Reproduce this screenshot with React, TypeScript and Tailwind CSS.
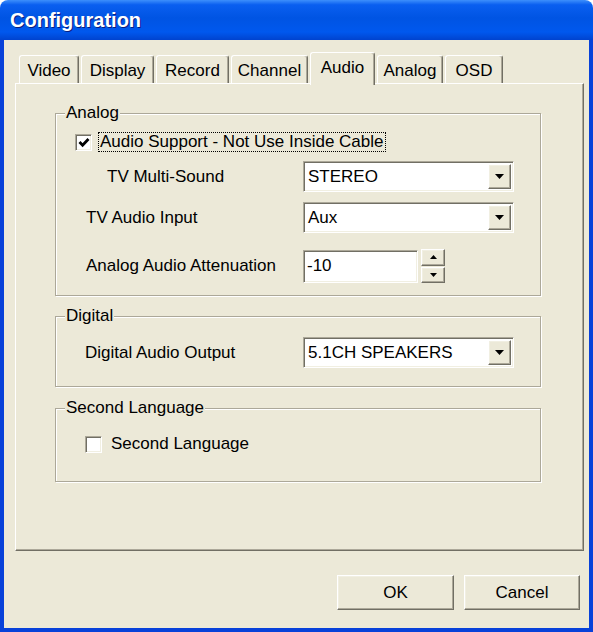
import React from 'react'

const raised =
  'bg-[#ece9d8] border border-t-white border-l-white border-r-[#716f64] border-b-[#716f64] shadow-[inset_-1px_-1px_0_#aca899,inset_1px_1px_0_#f1efe2]'
const sunken =
  'border border-t-[#aca899] border-l-[#aca899] border-r-white border-b-white shadow-[inset_1px_1px_0_#716f64,inset_-1px_-1px_0_#f1efe2]'

function Arrow({ up, small }: { up?: boolean; small?: boolean }) {
  const w = small ? 7 : 9
  const h = small ? 4 : 5
  const d = up ? `M0 ${h}H${w}L${w / 2} 0z` : `M0 0H${w}L${w / 2} ${h}z`
  return (
    <svg width={w} height={h} viewBox={`0 0 ${w} ${h}`}>
      <path d={d} fill="#000" />
    </svg>
  )
}

function Checkbox({ checked, className }: { checked?: boolean; className?: string }) {
  return (
    <div className={`w-[17px] h-[17px] bg-white flex items-center justify-center ${sunken} ${className ?? ''}`}>
      {checked && (
        <svg width="12" height="11" viewBox="0 0 12 11">
          <path d="M1.5 5L4.6 8.2L10.5 2" fill="none" stroke="#000" strokeWidth="2.8" />
        </svg>
      )}
    </div>
  )
}

function Combo({ value }: { value: string }) {
  return (
    <div className={`flex w-[211px] h-[31px] bg-white p-[1px] ${sunken}`}>
      <div className="flex-1 flex items-center pl-[2px] ml-[1px]">{value}</div>
      <div className={`w-[23px] mr-[1px] my-[1px] flex items-center justify-center ${raised}`}>
        <Arrow />
      </div>
    </div>
  )
}

function Group({ title, className, children }: { title: string; className?: string; children: React.ReactNode }) {
  return (
    <fieldset
      className={`ml-[39px] w-[486px] border border-[#aca899] shadow-[inset_1px_1px_0_#fff,1px_1px_0_#fff] ${className ?? ''}`}
    >
      <legend className="ml-[9px] px-[1px] leading-[20px] bg-[#ece9d8] relative">{title}</legend>
      {children}
    </fieldset>
  )
}

const tabs = [
  { name: 'Video', w: 'w-[60px]' },
  { name: 'Display', w: 'w-[73px]' },
  { name: 'Record', w: 'w-[73px]' },
  { name: 'Channel', w: 'w-[77px]' },
  { name: 'Audio', w: 'w-[65px]', active: true },
  { name: 'Analog', w: 'w-[66px]' },
  { name: 'OSD', w: 'w-[58px]' },
]

export default function App() {
  return (
    <div className="w-[593px] h-[632px] bg-white flex flex-col font-['Liberation_Sans',Arial,sans-serif] text-[17px] text-black">
      {/* title bar */}
      <div className="h-[40px] rounded-t-[8px] bg-[linear-gradient(to_bottom,#3d8ffc_0%,#0a5ff0_12%,#0054e3_45%,#0058ee_80%,#0043cf_100%)] flex items-center pl-[10px]">
        <span className="text-white font-bold text-[20px] [text-shadow:1px_1px_0_#0a1e80]">Configuration</span>
      </div>

      {/* window body */}
      <div className="flex-1 flex flex-col bg-[#ece9d8] border-x-4 border-b-4 border-[#0841d9]">
        {/* tab strip */}
        <div className="mt-[12px] ml-[15px] h-[31px] flex items-end gap-[2px]">
          {tabs.map((t) =>
            t.active ? (
              <div
                key={t.name}
                className={`${t.w} h-[33px] -mb-[2px] relative z-10 bg-[#ece9d8] rounded-t-[3px] border-t border-l border-r border-t-white border-l-white border-r-[#716f64] shadow-[inset_-1px_0_0_#aca899] flex items-center justify-center pb-[2px]`}
              >
                {t.name}
              </div>
            ) : (
              <div
                key={t.name}
                className={`${t.w} h-[28px] bg-[#ece9d8] rounded-t-[3px] border-t border-l border-r border-t-white border-l-white border-r-[#716f64] shadow-[inset_-1px_0_0_#aca899] flex items-center justify-center pt-[2px]`}
              >
                {t.name}
              </div>
            )
          )}
        </div>

        {/* tab page */}
        <div className="ml-[11px] w-[569px] h-[468px] flex flex-col pt-[19px] border border-t-white border-l-white border-r-[#716f64] border-b-[#716f64] shadow-[inset_-1px_-1px_0_#aca899]">
          <Group title="Analog" className="pb-[12px]">
            <div className="mt-[9px] h-[20px] flex items-center">
              <Checkbox checked className="ml-[19px]" />
              <span className="ml-[6px] px-[1px] leading-[18px] border border-dotted border-black">
                Audio Support - Not Use Inside Cable
              </span>
            </div>
            <div className="mt-[9px] flex items-center">
              <span className="w-[247px] pl-[51px]">TV Multi-Sound</span>
              <Combo value="STEREO" />
            </div>
            <div className="mt-[10px] flex items-center">
              <span className="w-[247px] pl-[30px]">TV Audio Input</span>
              <Combo value="Aux" />
            </div>
            <div className="mt-[16px] flex items-center">
              <span className="w-[247px] pl-[30px]">Analog Audio Attenuation</span>
              <div className={`w-[115px] h-[33px] bg-white flex items-center pl-[3px] ${sunken}`}>-10</div>
              <div className="ml-[3px] w-[24px] h-[34px] flex flex-col gap-[1px]">
                <div className={`flex-1 flex items-center justify-center ${raised}`}>
                  <Arrow up small />
                </div>
                <div className={`flex-1 flex items-center justify-center ${raised}`}>
                  <Arrow small />
                </div>
              </div>
            </div>
          </Group>

          <Group title="Digital" className="mt-[10px] pb-[18px]">
            <div className="mt-[11px] flex items-center">
              <span className="w-[247px] pl-[29px]">Digital Audio Output</span>
              <Combo value="5.1CH SPEAKERS" />
            </div>
          </Group>

          <Group title="Second Language" className="mt-[11px] pb-[27px]">
            <div className="mt-[16px] h-[20px] flex items-center">
              <Checkbox className="ml-[29px]" />
              <span className="ml-[9px]">Second Language</span>
            </div>
          </Group>
        </div>

        {/* buttons */}
        <div className="mt-[24px] flex justify-end gap-[10px] pr-[9px]">
          <button className={`w-[117px] h-[35px] ${raised}`}>OK</button>
          <button className={`w-[116px] h-[35px] ${raised}`}>Cancel</button>
        </div>
      </div>
    </div>
  )
}
